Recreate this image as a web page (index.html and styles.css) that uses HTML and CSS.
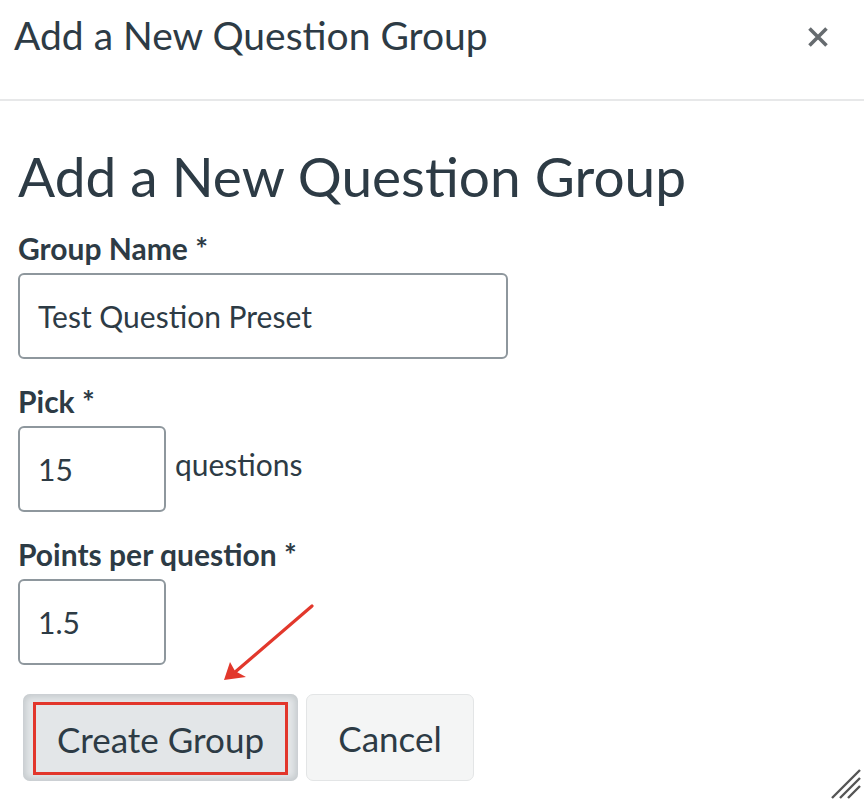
FILE: index.html
```html
<!DOCTYPE html>
<html>
<head>
<meta charset="utf-8">
<link rel="stylesheet" href="styles.css">
</head>
<body>
<div class="dialog">
  <div class="header">
    <div class="title">Add a New Question Group</div>
    <button class="close" aria-label="Close">
      <svg width="22" height="20" viewBox="0 0 22 20"><path d="M2.5 1.5 L19.5 18.5 M19.5 1.5 L2.5 18.5" stroke="#666b6f" stroke-width="3.6" stroke-linecap="butt"/></svg>
    </button>
  </div>
  <div class="content">
    <h1 class="heading">Add a New Question Group</h1>
    <div class="field">
      <label class="label">Group Name *</label>
      <div class="input wide">Test Question Preset</div>
    </div>
    <div class="field">
      <label class="label">Pick *</label>
      <div class="row">
        <div class="input small">15</div>
        <span class="suffix">questions</span>
      </div>
    </div>
    <div class="field">
      <label class="label">Points per question *</label>
      <div class="input small">1.5</div>
    </div>
    <div class="actions">
      <button class="btn primary"><span class="mark">Create Group</span></button>
      <button class="btn cancel">Cancel</button>
    </div>
  </div>
  <svg class="arrow" width="100" height="90" viewBox="0 0 100 90">
    <path d="M91 6 L13 73" stroke="#e2382c" stroke-width="3.2" stroke-linecap="round" fill="none"/>
    <path d="M3 80 L9 62 L14 71 L25 77 Z" fill="#e2382c"/>
  </svg>
  <svg class="grip" width="30" height="30" viewBox="0 0 30 30">
    <path d="M29 1 L1 29 M29 9 L9 29 M29 17 L17 29" stroke="#555" stroke-width="2.4"/>
  </svg>
</div>
</body>
</html>
```
FILE: styles.css
```css
html, body {
  margin: 0;
  padding: 0;
  background: #fff;
}
body {
  font-family: Lato, "Open Sans", sans-serif;
  color: #2d3b45;
}
.dialog {
  position: relative;
  width: 864px;
  height: 801px;
  overflow: hidden;
}
.header {
  height: 101px;
  border-bottom: 2px solid #e7e8e9;
  display: flex;
  justify-content: space-between;
  align-items: flex-start;
  padding: 10px 35px 0 14px;
  box-sizing: border-box;
}
.title {
  font-size: 39px;
  line-height: 50px;
  font-weight: 400;
}
.close {
  margin-top: 17px;
  padding: 0;
  border: 0;
  background: none;
  width: 22px;
  height: 20px;
}
.close svg { display: block; }
.content {
  padding: 0 18px;
}
.heading {
  margin: 41px 0 0;
  font-size: 55px;
  line-height: 68px;
  font-weight: 400;
}
.field {
  margin-top: 24px;
}
.heading + .field { margin-top: 20px; }
.label {
  display: block;
  font-size: 30px;
  font-weight: 700;
  line-height: 36px;
  margin-bottom: 7px;
}
.input {
  box-sizing: border-box;
  height: 86px;
  border: 2px solid #8e979d;
  border-radius: 6px;
  font-size: 30px;
  line-height: 36px;
  padding: 0 18px;
  display: flex;
  align-items: center;
}
.wide { width: 490px; }
.small { width: 148px; }
.row {
  display: flex;
  align-items: center;
  gap: 9px;
}
.suffix {
  font-size: 30px;
  line-height: 36px;
  margin-bottom: 10px;
}
.actions {
  display: flex;
  gap: 8px;
  margin-top: 29px;
  padding-left: 5px;
}
.btn {
  font-family: Lato, "Open Sans", sans-serif;
  color: #2d3b45;
  font-size: 35px;
  height: 87px;
  border-radius: 7px;
  box-sizing: border-box;
  cursor: pointer;
}
.primary {
  width: 275px;
  background: #e3e6e8;
  border: 0;
  box-shadow: inset 0 0 6px 3px #c5cacd;
  padding: 8px 10px 6px 10px;
  display: flex;
}
.mark {
  flex: 1;
  border: 3px solid #e2362b;
  display: flex;
  align-items: center;
  justify-content: center;
}
.cancel {
  width: 168px;
  background: #f4f5f5;
  border: 1px solid #e3e5e6;
}
.arrow {
  position: absolute;
  left: 221px;
  top: 600px;
}
.grip {
  position: absolute;
  right: 3px;
  bottom: 2px;
}
```
